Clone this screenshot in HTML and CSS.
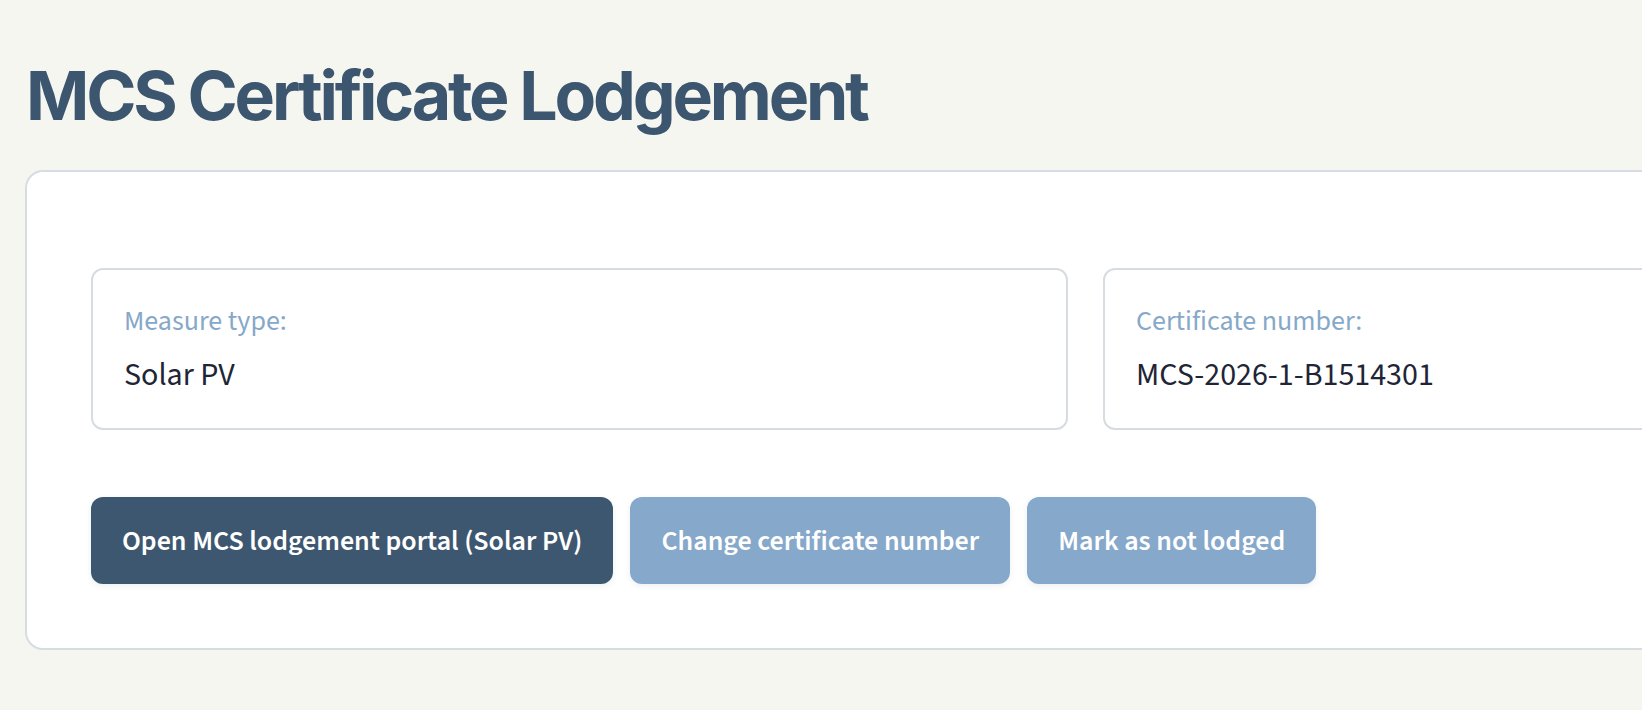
FILE: index.html
```html
<!DOCTYPE html>
<html lang="en">
<head>
<meta charset="utf-8">
<title>MCS Certificate Lodgement</title>
<link rel="stylesheet" href="styles.css">
</head>
<body>
<main class="page">
  <h1 class="title">MCS Certificate Lodgement</h1>
  <section class="card">
    <div class="fields">
      <div class="field">
        <div class="field-label">Measure type:</div>
        <div class="field-value">Solar PV</div>
      </div>
      <div class="field">
        <div class="field-label">Certificate number:</div>
        <div class="field-value">MCS-2026-1-B1514301</div>
      </div>
    </div>
    <div class="actions">
      <button class="btn btn-primary">Open MCS lodgement portal (Solar PV)</button>
      <button class="btn btn-secondary">Change certificate number</button>
      <button class="btn btn-secondary">Mark as not lodged</button>
    </div>
  </section>
</main>
</body>
</html>
```

FILE: styles.css
```css
html, body {
  margin: 0;
  padding: 0;
  background: #f6f6f1;
  overflow: hidden;
}
body {
  font-family: "Source Sans 3", "Lato", "Noto Sans", sans-serif;
}
.page {
  padding: 54px 0 0 25px;
  width: 2200px;
}
.title {
  margin: 0 0 34px 1px;
  font-family: "Inter", sans-serif;
  font-weight: 700;
  font-size: 68px;
  line-height: 82px;
  letter-spacing: -3.2px;
  color: #3d5670;
}
.card {
  box-sizing: border-box;
  width: 2000px;
  background: #fff;
  border: 2px solid #d6dce2;
  border-radius: 18px;
  padding: 96px 66px 64px 64px;
}
.fields {
  display: grid;
  grid-template-columns: 977px 977px;
  gap: 35px;
}
.field {
  box-sizing: border-box;
  height: 162px;
  border: 2px solid #d6dce2;
  border-radius: 12px;
  padding: 34px 31px 0;
}
.field-label {
  color: #86a8c9;
  font-size: 28px;
  line-height: 34px;
}
.field-value {
  margin-top: 18px;
  color: #1e2536;
  font-size: 32px;
  line-height: 38px;
}
.actions {
  display: flex;
  gap: 17px;
  margin-top: 67px;
}
.btn {
  font-family: inherit;
  border: none;
  border-radius: 12px;
  height: 87px;
  padding: 0 31px;
  font-size: 28px;
  font-weight: 600;
  color: #fff;
  box-shadow: 0 2px 6px rgba(30, 50, 80, 0.08);
}
.btn-primary {
  background: #3e5771;
}
.btn-secondary {
  background: #86a8ca;
}
```
